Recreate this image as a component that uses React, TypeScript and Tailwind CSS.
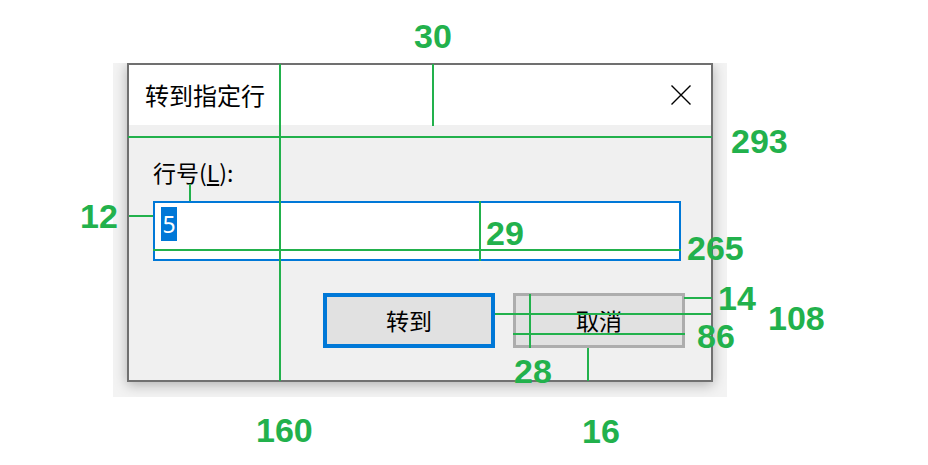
export default function App() {
  return (
    <div className="relative h-[465px] w-[928px] overflow-hidden bg-white pl-[113px] pt-[63px] font-['Noto_Sans_CJK_SC','Noto_Sans',sans-serif] text-black">
      {/* window with its shadow */}
      <div className="h-[334px] w-[614px] overflow-hidden bg-[#f3f3f3] pl-[14px]">
        <div className="flex h-[319px] w-[586px] flex-col border-2 border-[#707070] bg-[#f0f0f0] shadow-[0_3px_12px_rgba(0,0,0,0.28)]">
          <div className="flex h-[60px] items-center justify-between bg-white pl-[16px] pr-[20px]">
            <span className="text-[24px] leading-[30px]">转到指定行</span>
            <svg width="20" height="20" viewBox="0 0 20 20">
              <path d="M0.5 0.5L19.5 19.5M19.5 0.5L0.5 19.5" stroke="#000" strokeWidth="1.4" />
            </svg>
          </div>
          <div className="flex-1 pl-[24px] pr-[26px] pt-[32px]">
            <div className="h-[30px] text-[23px] leading-[30px]">
              行号(<span className="underline underline-offset-2">L</span>):
            </div>
            <div className="mt-[14px] h-[60px] w-[528px] border-2 border-[#0078d7] bg-white pl-[6px] pt-[4px]">
              <span className="flex h-[34px] w-[16px] items-center justify-center bg-[#0078d7] font-['Noto_Sans',sans-serif] text-[23px] leading-none text-white">
                5
              </span>
            </div>
            <div className="mt-[32px] flex justify-end gap-[18px]">
              <div className="flex h-[55px] w-[172px] items-center justify-center border-4 border-[#0078d7] bg-[#e1e1e1] text-[23px]">
                转到
              </div>
              <div className="flex h-[55px] w-[172px] items-center justify-center border-[3px] border-[#adadad] bg-[#e1e1e1] text-[23px]">
                取消
              </div>
            </div>
          </div>
        </div>
      </div>

      {/* measurement lines */}
      <div className="absolute left-[279px] top-[64px] h-[317px] w-[2px] bg-[#22b14c]" />
      <div className="absolute left-[128px] top-[136px] h-[2px] w-[584px] bg-[#22b14c]" />
      <div className="absolute left-[432px] top-[64px] h-[62px] w-[2px] bg-[#22b14c]" />
      <div className="absolute left-[189px] top-[184px] h-[17px] w-[2px] bg-[#22b14c]" />
      <div className="absolute left-[129px] top-[215px] h-[2px] w-[24px] bg-[#22b14c]" />
      <div className="absolute left-[153px] top-[249px] h-[2px] w-[528px] bg-[#22b14c]" />
      <div className="absolute left-[479px] top-[201px] h-[60px] w-[2px] bg-[#22b14c]" />
      <div className="absolute left-[495px] top-[313px] h-[2px] w-[216px] bg-[#22b14c]" />
      <div className="absolute left-[513px] top-[333px] h-[2px] w-[172px] bg-[#22b14c]" />
      <div className="absolute left-[529px] top-[294px] h-[54px] w-[2px] bg-[#22b14c]" />
      <div className="absolute left-[684px] top-[297px] h-[2px] w-[28px] bg-[#22b14c]" />
      <div className="absolute left-[587px] top-[348px] h-[33px] w-[2px] bg-[#22b14c]" />

      {/* measurement labels */}
      <div className="font-['Liberation_Sans',Arial,sans-serif] text-[34px] font-bold leading-none text-[#22b14c]">
        <span className="absolute left-[414px] top-[19px]">30</span>
        <span className="absolute left-[731px] top-[124px]">293</span>
        <span className="absolute left-[80px] top-[199px]">12</span>
        <span className="absolute left-[486px] top-[216px]">29</span>
        <span className="absolute left-[687px] top-[231px]">265</span>
        <span className="absolute left-[718px] top-[281px]">14</span>
        <span className="absolute left-[768px] top-[301px]">108</span>
        <span className="absolute left-[697px] top-[319px]">86</span>
        <span className="absolute left-[514px] top-[354px]">28</span>
        <span className="absolute left-[256px] top-[413px]">160</span>
        <span className="absolute left-[582px] top-[414px]">16</span>
      </div>
    </div>
  )
}
